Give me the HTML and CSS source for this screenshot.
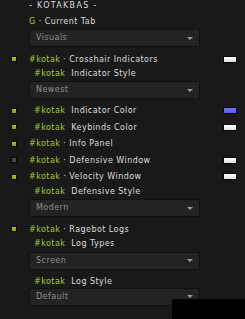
FILE: index.html
```html
<!DOCTYPE html>
<html lang="en">
<head>
  <meta charset="UTF-8">
  <title>KOTAKBASE</title>
  <link rel="stylesheet" href="styles.css">
</head>
<body>

  <div class="menu">
    <div class="title">- KOTAKBAS -</div>

    <div class="label"><span class="tag">G</span> · Current Tab</div>
    <div class="dropdown">Visuals<span class="arrow"></span></div>

    <div class="row first">
      <span class="check on"></span>
      <span class="name"><span class="tag">#kotak</span> · Crosshair Indicators</span>
      <span class="swatch"></span>
    </div>
    <div class="sublabel"><span class="tag">#kotak</span>&nbsp;&nbsp;Indicator Style</div>
    <div class="dropdown">Newest<span class="arrow"></span></div>

    <div class="group">
      <div class="row">
        <span class="check on"></span>
        <span class="name sub"><span class="tag">#kotak</span>&nbsp;&nbsp;Indicator Color</span>
        <span class="swatch blue"></span>
      </div>
      <div class="row">
        <span class="check on"></span>
        <span class="name sub"><span class="tag">#kotak</span>&nbsp;&nbsp;Keybinds Color</span>
        <span class="swatch"></span>
      </div>
      <div class="row">
        <span class="check on"></span>
        <span class="name"><span class="tag">#kotak</span> · Info Panel</span>
      </div>
      <div class="row">
        <span class="check"></span>
        <span class="name"><span class="tag">#kotak</span> · Defensive Window</span>
        <span class="swatch"></span>
      </div>
      <div class="row">
        <span class="check on"></span>
        <span class="name"><span class="tag">#kotak</span> · Velocity Window</span>
        <span class="swatch"></span>
      </div>
    </div>
    <div class="sublabel"><span class="tag">#kotak</span>&nbsp;&nbsp;Defensive Style</div>
    <div class="dropdown">Modern<span class="arrow"></span></div>

    <div class="row first">
      <span class="check on"></span>
      <span class="name"><span class="tag">#kotak</span> · Ragebot Logs</span>
    </div>
    <div class="sublabel tall"><span class="tag">#kotak</span>&nbsp;&nbsp;Log Types</div>
    <div class="dropdown">Screen<span class="arrow"></span></div>

    <div class="sublabel last"><span class="tag">#kotak</span>&nbsp;&nbsp;Log Style</div>
    <div class="dropdown">Default<span class="arrow"></span></div>
  </div>

  <!-- leftover black box in the corner -->
  <div class="blackout"></div>

</body>
</html>
```

FILE: styles.css
```css
body {
  margin: 0;
  padding: 0;
  background: #191919;
  width: 245px;
  height: 319px;
  overflow: hidden;
  position: relative;
  font-family: "DejaVu Sans", sans-serif;
  font-size: 8px;
  letter-spacing: 0.45px;
  color: #dcdcdc;
}

.menu {
  display: flex;
  flex-direction: column;
  padding-left: 11px;
  padding-right: 8px;
}

.tag {
  color: #a3cc25;
}

.title {
  height: 12px;
  line-height: 12px;
  padding-left: 18px;
  letter-spacing: 1.3px;
}

.label {
  margin-top: 3px;
  height: 14px;
  line-height: 14px;
  padding-left: 18px;
}

.sublabel {
  height: 14px;
  line-height: 14px;
  padding-left: 23px;
}

.sublabel.tall {
  height: 14.5px;
  line-height: 14.5px;
}

.sublabel.last {
  margin-top: 5px;
  height: 13px;
  line-height: 13px;
}

.dropdown {
  margin-left: 18px;
  width: 171px;
  height: 18px;
  box-sizing: border-box;
  background: #232323;
  border: 1px solid #101010;
  color: #8e8e8e;
  line-height: 16px;
  padding-left: 6px;
  display: flex;
  align-items: center;
  justify-content: space-between;
  padding-right: 6px;
}

.arrow {
  width: 0;
  height: 0;
  border-left: 3px solid transparent;
  border-right: 3px solid transparent;
  border-top: 3px solid #9a9a9a;
}

.row {
  height: 16.5px;
  display: flex;
  align-items: center;
}

.row.first {
  margin-top: 4px;
  height: 16px;
}

.group {
  margin-top: 3.5px;
}

.check {
  width: 6px;
  height: 6px;
  box-sizing: border-box;
  border: 1px solid #0b0b0b;
  background: #444444;
  margin-right: 12px;
  flex-shrink: 0;
}

.check.on {
  background: linear-gradient(#9fcb1f, #7fa516);
}

.name {
  flex: 1;
  white-space: nowrap;
}

.name.sub {
  padding-left: 5px;
}

.swatch {
  width: 14px;
  height: 7px;
  box-sizing: border-box;
  border: 1px solid #0a0a0a;
  background: linear-gradient(#ffffff, #dedede);
}

.swatch.blue {
  background: linear-gradient(#7272ff, #5a5ae8);
}

.blackout {
  position: absolute;
  left: 172px;
  top: 299px;
  right: 0;
  bottom: 0;
  background: #000;
}
```
